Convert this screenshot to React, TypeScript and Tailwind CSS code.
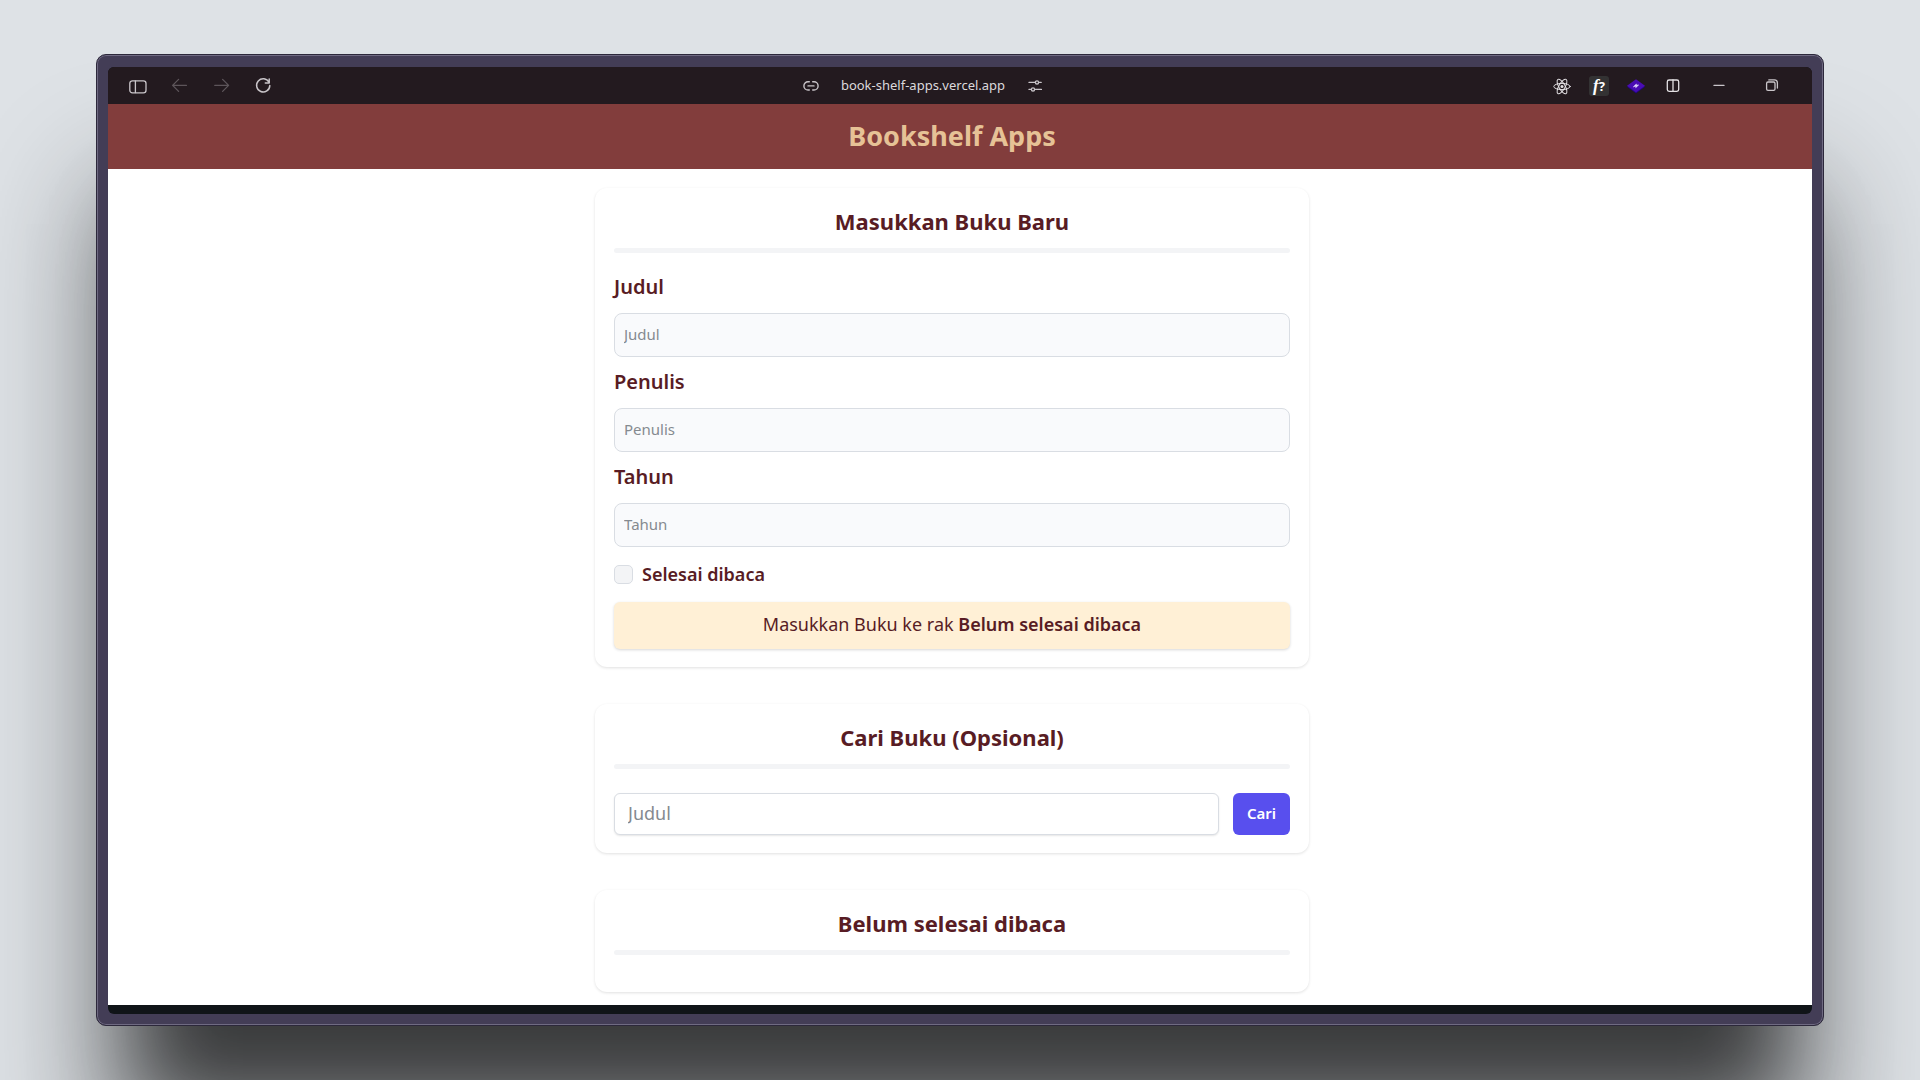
import React, { useState } from "react";

type IconProps = { children: React.ReactNode; className?: string };

function Icon({ children, className = "text-[#c9c5c9]" }: IconProps) {
  return (
    <svg
      viewBox="0 0 20 20"
      className={`size-5 ${className}`}
      fill="none"
      stroke="currentColor"
      strokeWidth="1.3"
      strokeLinecap="round"
      strokeLinejoin="round"
      aria-hidden="true"
    >
      {children}
    </svg>
  );
}

function ToolButton({ label, children, className = "" }: { label: string; children: React.ReactNode; className?: string }) {
  return (
    <button type="button" aria-label={label} className={`size-5 shrink-0 ${className}`}>
      {children}
    </button>
  );
}

function Toolbar() {
  return (
    <div className="grid h-[37px] grid-cols-[1fr_auto_1fr] items-center bg-[#231a1f] pl-5 pr-[30px]">
      <div className="flex items-center gap-[22px]">
        <ToolButton label="Sidebar">
          <Icon>
            <rect x="1.8" y="4.8" width="16.2" height="12" rx="2.6" />
            <path d="M7.4 5v11.6" />
          </Icon>
        </ToolButton>
        <ToolButton label="Back">
          <Icon className="text-[#5d555a]">
            <path d="M16.4 9.4H2.8M8.6 3.4l-6 6 6 6" />
          </Icon>
        </ToolButton>
        <ToolButton label="Forward">
          <Icon className="text-[#5d555a]">
            <path d="M2.8 9.4h13.6M10.6 3.4l6 6-6 6" />
          </Icon>
        </ToolButton>
        <ToolButton label="Reload">
          <Icon>
            <path d="M15 6.2A6.6 6.6 0 1 0 15.8 9.6" strokeWidth="1.5" />
            <path d="M15.2 3v3.9h-3.9" strokeWidth="1.5" />
          </Icon>
        </ToolButton>
      </div>

      <div className="flex items-center gap-5 pr-[64px]">
        <ToolButton label="Copy link">
          <Icon>
            <path d="M8.3 5.8H7a4 4 0 0 0 0 8.2h1.3M11.7 5.8H13a4 4 0 0 1 0 8.2h-1.3M7 9.9h6" strokeWidth="1.4" />
          </Icon>
        </ToolButton>
        <span className="-mt-0.5 text-[13px] leading-5 text-[#dcd9dc]">book-shelf-apps.vercel.app</span>
        <ToolButton label="Site settings">
          <Icon>
            <path d="M4 6.4h6M14.2 6.4h2M4 13.4h2M10 13.4h6.4" />
            <circle cx="12" cy="6.4" r="1.6" />
            <circle cx="8" cy="13.4" r="1.6" />
          </Icon>
        </ToolButton>
      </div>

      <div className="flex items-center justify-end gap-[17px]">
        <ToolButton label="React developer tools">
          <Icon className="text-[#e4e1e4]">
            <g strokeWidth="1">
              <ellipse cx="10" cy="10.5" rx="8.2" ry="3.1" />
              <ellipse cx="10" cy="10.5" rx="8.2" ry="3.1" transform="rotate(60 10 10.5)" />
              <ellipse cx="10" cy="10.5" rx="8.2" ry="3.1" transform="rotate(120 10 10.5)" />
            </g>
            <circle cx="10" cy="10.5" r="1.5" fill="currentColor" stroke="none" />
          </Icon>
        </ToolButton>
        <ToolButton
          label="Font finder"
          className="rounded-[3px] bg-[#333233] text-center font-['Noto_Sans'] text-[13px] leading-5 font-bold text-white"
        >
          <i className="font-['Liberation_Serif'] text-[17px]">f</i>?
        </ToolButton>
        <ToolButton label="Extension">
          <Icon>
            <path d="M1 10.8 10 5l9 5.8-9 6.4z" fill="#22078a" stroke="none" />
            <path d="M1 9.8 10 3.2l9 6.6-9 6.4z" fill="#4a0cb4" stroke="none" />
            <path d="M7.6 10.6l2.8-2.6-.2 1.3 2.4-.3-2.9 2.7.2-1.4z" fill="#e6dcff" stroke="#e6dcff" strokeWidth=".6" />
          </Icon>
        </ToolButton>
        <ToolButton label="Split view">
          <Icon className="text-[#e4e1e4]">
            <rect x="4.3" y="4" width="11.4" height="11.4" rx="1.8" />
            <path d="M10 4v11.4" />
          </Icon>
        </ToolButton>
        <ToolButton label="Minimize" className="ml-[9px]">
          <Icon>
            <path d="M5 9.4h10" />
          </Icon>
        </ToolButton>
        <ToolButton label="Restore" className="ml-4">
          <Icon>
            <rect x="4.6" y="6" width="8.4" height="8.4" rx="1.4" />
            <path d="M6.8 3.9h5.6a3 3 0 0 1 3 3v5.2" />
          </Icon>
        </ToolButton>
      </div>
    </div>
  );
}

function Card({ title, children, className = "pb-[18px]" }: { title: string; children?: React.ReactNode; className?: string }) {
  return (
    <section className={`rounded-xl bg-white px-[19px] pt-[18px] shadow-[0_1px_3px_rgba(0,0,0,0.12)] ${className}`}>
      <h2 className="text-center text-[22px] leading-[31px] font-bold">{title}</h2>
      <hr className="mt-[11px] h-[5px] rounded-sm border-0 bg-gray-100" />
      {children}
    </section>
  );
}

function Field({ id, label }: { id: string; label: string }) {
  return (
    <div>
      <label htmlFor={id} className="block text-[20px] leading-8 font-semibold">
        {label}
      </label>
      <input
        id={id}
        placeholder={label}
        className="mt-2.5 block h-11 w-full rounded-lg border border-[#d9dde3] bg-[#f9fafc] px-[9px] pb-0.5 text-[15px] placeholder:text-[#858a90]"
      />
    </div>
  );
}

export default function App() {
  const [done, setDone] = useState(false);
  return (
    <div className="flex min-h-screen flex-col overflow-hidden bg-[#dee2e6] px-24 py-[54px] font-['Noto_Sans',sans-serif]">
      <div className="flex flex-1 flex-col rounded-[10px] border border-[#2c283b] bg-[#433d56] px-[11px] pt-3 pb-[11px] shadow-[inset_0_0_0_1px_#6f6a82,0_120px_80px_-50px_rgba(0,0,0,0.56),0_130px_120px_0_rgba(0,0,0,0.42)]">
        <div className="flex flex-1 flex-col overflow-hidden rounded-md bg-[#101418] pb-[9px]">
          <Toolbar />
          <header className="bg-[#823d3c] pt-[15px] pr-4 pb-[17px] text-center">
            <h1 className="text-[27px] leading-[33px] font-bold text-[#e6c296]">Bookshelf Apps</h1>
          </header>
          <main className="flex-1 bg-white pt-[19px] pr-4 pb-[13px] text-[#581c24]">
            <div className="mx-auto flex max-w-[714px] flex-col gap-[37px]">
              <Card title="Masukkan Buku Baru">
                <form className="mt-[18px]" onSubmit={(e) => e.preventDefault()}>
                  <div className="flex flex-col gap-[9px]">
                    <Field id="judul" label="Judul" />
                    <Field id="penulis" label="Penulis" />
                    <Field id="tahun" label="Tahun" />
                  </div>
                  <div className="my-[18px] flex h-[19px] items-center gap-[9px]">
                    <input
                      id="selesai"
                      type="checkbox"
                      checked={done}
                      onChange={(e) => setDone(e.target.checked)}
                      className="size-[19px] appearance-none rounded-[5px] border border-[#d9dde3] bg-gray-100 checked:bg-[#584fee]"
                    />
                    <label htmlFor="selesai" className="text-[18px] leading-[19px] font-semibold">
                      Selesai dibaca
                    </label>
                  </div>
                  <button
                    type="submit"
                    className="block h-[47px] w-full rounded-md bg-[#fff0d6] pb-0.5 text-[18px] shadow-[0_1px_3px_rgba(0,0,0,0.16)]"
                  >
                    Masukkan Buku ke rak{" "}
                    <span className="font-semibold">{done ? "Selesai dibaca" : "Belum selesai dibaca"}</span>
                  </button>
                </form>
              </Card>

              <Card title="Cari Buku (Opsional)">
                <form className="mt-6 flex gap-3.5" onSubmit={(e) => e.preventDefault()}>
                  <input
                    aria-label="Judul"
                    placeholder="Judul"
                    className="h-[42px] min-w-0 flex-1 rounded-md border border-[#d9dde3] bg-white px-[13px] pb-0.5 text-[18px] shadow-[0_1px_2px_rgba(0,0,0,0.1)] placeholder:text-[#858a90]"
                  />
                  <button type="submit" className="h-[42px] rounded-md bg-[#584fee] px-3.5 pb-0.5 text-[15px] font-semibold text-white">
                    Cari
                  </button>
                </form>
              </Card>

              <Card title="Belum selesai dibaca" className="pb-[37px]" />
            </div>
          </main>
        </div>
      </div>
    </div>
  );
}
